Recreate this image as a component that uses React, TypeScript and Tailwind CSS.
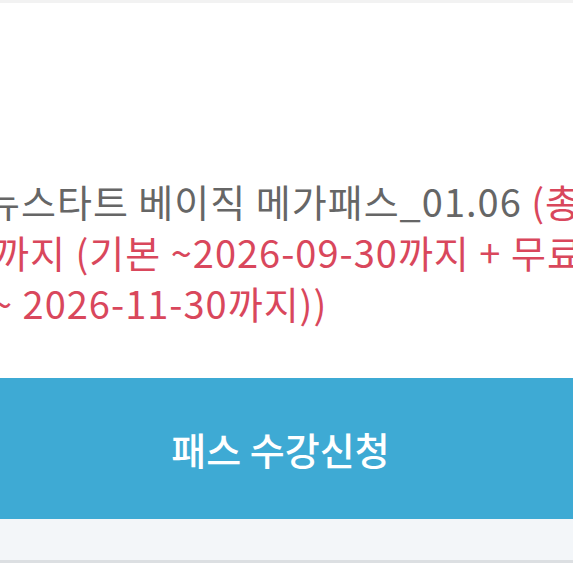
export default function App() {
  return (
    <div className="w-[573px] h-[573px] overflow-hidden bg-white flex flex-col" style={{ fontFamily: '"Noto Sans CJK KR", "Noto Sans", sans-serif' }}>
      <div className="h-[3px] bg-[#f2f2f2] shrink-0" />
      <div className="h-[172px] shrink-0" />
      <div className="flex flex-col text-[38px] leading-[51px] whitespace-nowrap tracking-[1px]">
        <div className="ml-[-15px] text-[#666666]">
          뉴스타트 베이직 메가패스_01.06 <span className="text-[#d9475c]">(총 수강기간</span>
        </div>
        <div className="ml-[-6px] text-[#d9475c]">까지 (기본 ~2026-09-30까지 + 무료연장</div>
        <div className="ml-[-9px] text-[#d9475c]">~ 2026-11-30까지))</div>
      </div>
      <div className="h-[50px] shrink-0" />
      <button className="h-[141px] shrink-0 bg-[#3eaad4] text-white text-[38px] font-medium flex items-center justify-center pr-[12px]">
        패스 수강신청
      </button>
      <div className="h-[44px] shrink-0 bg-[#f3f6f9] border-b-[3px] border-[#dcdfe2]" />
    </div>
  )
}
